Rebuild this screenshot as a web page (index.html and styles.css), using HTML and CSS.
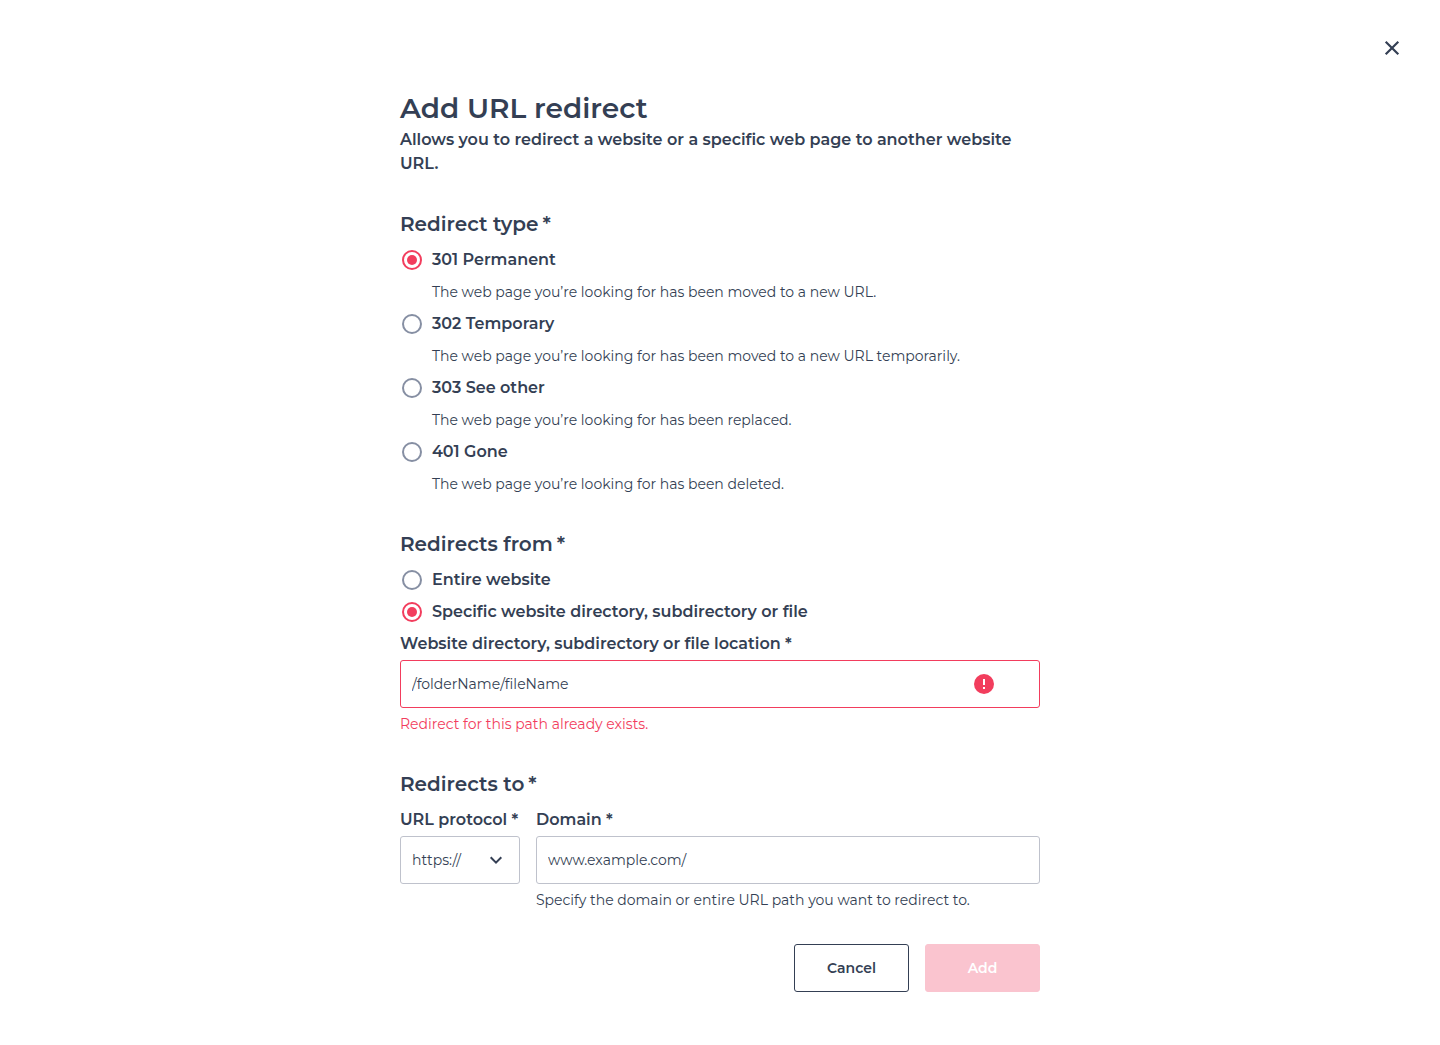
FILE: index.html
```html
<!DOCTYPE html>
<html lang="en">
<head>
<meta charset="utf-8">
<meta name="viewport" content="width=device-width, initial-scale=1">
<title>Add URL redirect</title>
<link rel="stylesheet" href="styles.css">
</head>
<body>
<header class="topbar">
  <button class="close" type="button" aria-label="Close">
    <svg width="24" height="24" viewBox="0 0 24 24" fill="none" stroke="currentColor" stroke-width="2.2"><path d="M5.7 5.7 18.3 18.3M18.3 5.7 5.7 18.3"/></svg>
  </button>
</header>
<main class="dialog">
  <div class="intro">
    <h1 class="title">Add URL redirect</h1>
    <p class="subtitle">Allows you to redirect a website or a specific web page to another website URL.</p>
  </div>
  <form class="form">
    <section class="group" role="radiogroup" aria-labelledby="type-heading">
      <h2 class="heading" id="type-heading">Redirect type<span class="star">*</span></h2>
      <label class="option"><input class="radio" type="radio" name="type" checked>301 Permanent</label>
      <p class="description">The web page you’re looking for has been moved to a new URL.</p>
      <label class="option"><input class="radio" type="radio" name="type">302 Temporary</label>
      <p class="description">The web page you’re looking for has been moved to a new URL temporarily.</p>
      <label class="option"><input class="radio" type="radio" name="type">303 See other</label>
      <p class="description">The web page you’re looking for has been replaced.</p>
      <label class="option"><input class="radio" type="radio" name="type">401 Gone</label>
      <p class="description">The web page you’re looking for has been deleted.</p>
    </section>
    <section class="group">
      <h2 class="heading">Redirects from<span class="star">*</span></h2>
      <label class="option"><input class="radio" type="radio" name="from">Entire website</label>
      <label class="option"><input class="radio" type="radio" name="from" checked>Specific website directory, subdirectory or file</label>
      <div class="field">
        <label class="label" for="path">Website directory, subdirectory or file location *</label>
        <div class="control">
          <input class="input invalid" id="path" type="text" value="/folderName/fileName" aria-invalid="true" aria-describedby="path-error">
          <svg class="alert" width="20" height="20" viewBox="0 0 20 20"><circle cx="10" cy="10" r="10" fill="#f23d5d"/><path d="M9 5h2v6H9zM9 13h2v2H9z" fill="#fff"/></svg>
        </div>
        <p class="hint error" id="path-error">Redirect for this path already exists.</p>
      </div>
    </section>
    <section class="group">
      <h2 class="heading">Redirects to<span class="star">*</span></h2>
      <div class="row">
        <div class="field protocol">
          <label class="label" for="protocol">URL protocol *</label>
          <div class="control">
            <select class="input select" id="protocol"><option>https://</option><option>http://</option></select>
            <svg class="chevron" width="24" height="24" viewBox="0 0 24 24" fill="none" stroke="currentColor" stroke-width="2"><path d="m6.7 9.3 5.3 5.3 5.3-5.3"/></svg>
          </div>
        </div>
        <div class="field domain">
          <label class="label" for="domain">Domain *</label>
          <input class="input" id="domain" type="text" value="www.example.com/">
          <p class="hint">Specify the domain or entire URL path you want to redirect to.</p>
        </div>
      </div>
    </section>
    <div class="actions">
      <button class="button" type="button">Cancel</button>
      <button class="button primary" type="submit" disabled>Add</button>
    </div>
  </form>
</main>
</body>
</html>
```
FILE: styles.css
```css
* {
  box-sizing: border-box;
}

body {
  margin: 0;
  background: #fff;
  color: #343f54;
  font-family: Montserrat, Inter, "Open Sans", sans-serif;
  font-size: 14px;
  font-variant-ligatures: none;
  line-height: 24px;
}

h1, h2, p {
  margin: 0;
}

button, input, select {
  font: inherit;
  font-variant-ligatures: none;
  color: inherit;
}

.topbar {
  display: flex;
  justify-content: flex-end;
  padding: 36px 36px 0;
}

.close {
  display: flex;
  padding: 0;
  border: 0;
  background: none;
  cursor: pointer;
}

.dialog {
  max-width: 672px;
  margin: 0 auto;
  padding: 28px 16px 48px;
}

.intro {
  margin-bottom: 32px;
}

.title {
  font-size: 28px;
  font-weight: 600;
  line-height: 40px;
}

.subtitle,
.option,
.label {
  font-size: 16px;
  font-weight: 600;
}

.form {
  display: flex;
  flex-direction: column;
  gap: 32px;
}

.group {
  display: flex;
  flex-direction: column;
  gap: 8px;
}

.heading {
  font-size: 20px;
  font-weight: 600;
  line-height: 32px;
}

.star {
  margin-left: 4px;
}

.option {
  display: flex;
  align-items: center;
  gap: 10px;
  padding-left: 2px;
}

.radio {
  appearance: none;
  flex: none;
  width: 20px;
  height: 20px;
  margin: 0;
  border: 2px solid #868fa3;
  border-radius: 50%;
}

.radio:checked {
  padding: 3px;
  border-color: #f23d5d;
  background: #f23d5d content-box;
}

.description {
  padding-left: 32px;
}

.field {
  display: flex;
  flex-direction: column;
  gap: 4px;
}

.control {
  position: relative;
  display: flex;
}

.input {
  appearance: none;
  width: 100%;
  height: 48px;
  padding: 0 11px;
  border: 1px solid #bfc2cc;
  border-radius: 3px;
  background: #fff;
}

.invalid {
  padding-right: 76px;
  border-color: #f23d5d;
}

.alert {
  position: absolute;
  top: 14px;
  right: 46px;
}

.chevron {
  position: absolute;
  top: 12px;
  right: 12px;
  pointer-events: none;
}

.error {
  color: #f23d5d;
}

.row {
  display: flex;
  gap: 16px;
}

.protocol {
  flex: 0 0 120px;
}

.domain {
  flex: 1;
}

.label {
  white-space: nowrap;
}

.actions {
  display: flex;
  justify-content: flex-end;
  gap: 16px;
}

.button {
  width: 115px;
  height: 48px;
  border: 1px solid #343f54;
  border-radius: 3px;
  background: #fff;
  font-weight: 600;
}

.primary {
  border-color: #fac4cf;
  background: #fac4cf;
  color: #fff;
}
```
